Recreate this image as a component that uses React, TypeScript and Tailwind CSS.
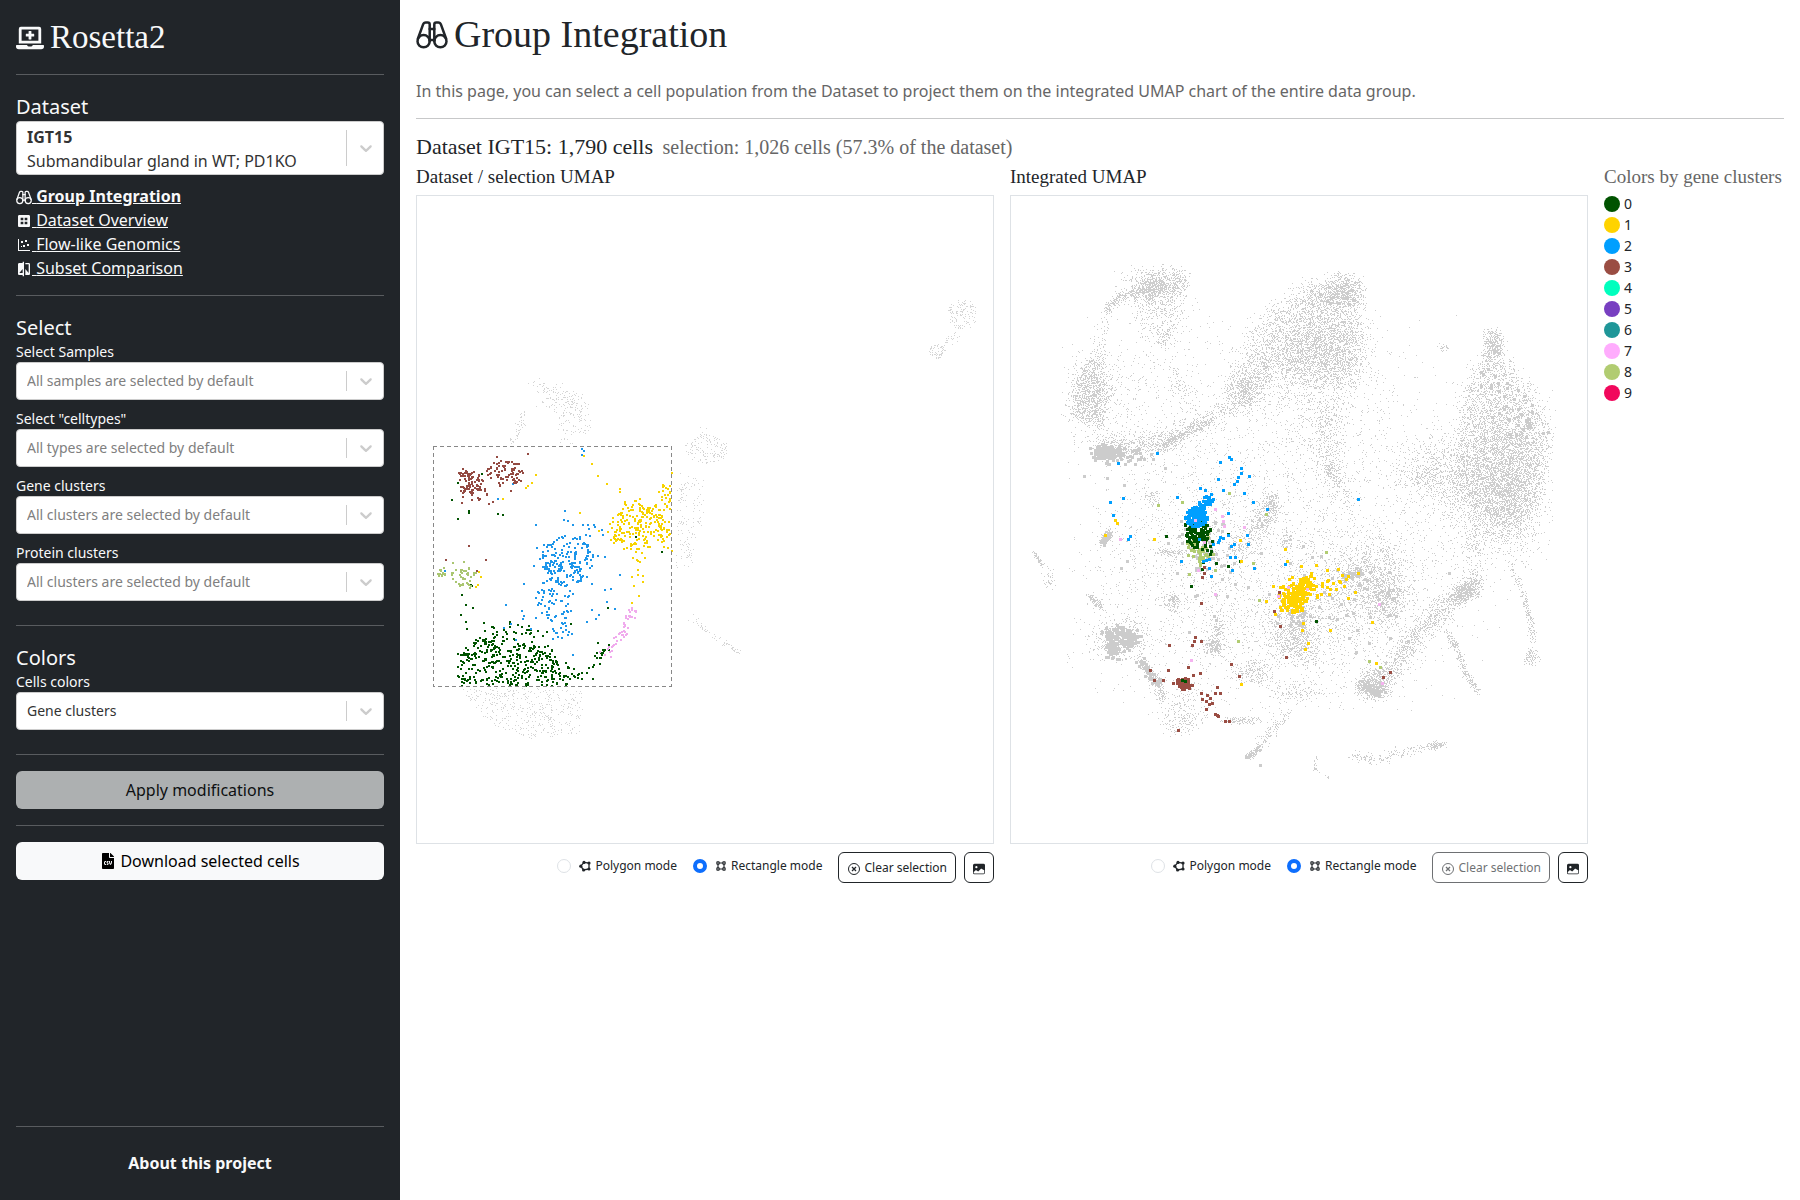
import React, { useId, useState } from 'react';
import type { ReactNode } from 'react';
import clsx from 'clsx';
import { BsImageFill } from 'react-icons/bs';
import { FaFileCsv, FaLaptopMedical } from 'react-icons/fa';
import { MdCompare, MdDataset } from 'react-icons/md';
import { PiBoundingBoxBold } from 'react-icons/pi';

type Icon = (props: { className?: string }) => ReactNode;

type Point = [number, number];

// cloud: gaussian around a centre, disc: even fill of an ellipse,
// area: even fill of a polygon, trail: jitter along a polyline
type Shape =
  | { kind: 'cloud' | 'disc'; at: Point; r: Point; n: number }
  | { kind: 'area' | 'trail'; pts: Point[]; w?: number; n: number }
  | { kind: 'exact'; pts: Point[] };

interface Layer {
  color: string;
  size: number;
  shapes: Shape[];
}

const cloud = (x: number, y: number, rx: number, ry: number, n: number): Shape => ({ kind: 'cloud', at: [x, y], r: [rx, ry], n });
const disc = (x: number, y: number, rx: number, ry: number, n: number): Shape => ({ kind: 'disc', at: [x, y], r: [rx, ry], n });
const area = (n: number, ...pts: Point[]): Shape => ({ kind: 'area', pts, n });
const trail = (n: number, w: number, ...pts: Point[]): Shape => ({ kind: 'trail', pts, w, n });
const exact = (...pts: Point[]): Shape => ({ kind: 'exact', pts });

const GENE_CLUSTERS = [
  { id: '0', color: '#005300' },
  { id: '1', color: '#ffd300' },
  { id: '2', color: '#009fff' },
  { id: '3', color: '#9a4d43' },
  { id: '4', color: '#00ffbe' },
  { id: '5', color: '#783fc1' },
  { id: '6', color: '#1f9698' },
  { id: '7', color: '#ffacfd' },
  { id: '8', color: '#b1cc71' },
  { id: '9', color: '#f1085c' },
];

function makeRandom(seed: number) {
  let s = seed;
  return () => {
    s = (s + 0x6d2b79f5) | 0;
    let t = Math.imul(s ^ (s >>> 15), 1 | s);
    t = (t + Math.imul(t ^ (t >>> 7), 61 | t)) ^ t;
    return ((t ^ (t >>> 14)) >>> 0) / 4294967296;
  };
}

function isInside([x, y]: Point, poly: Point[]) {
  let inside = false;
  for (let i = 0, j = poly.length - 1; i < poly.length; j = i++) {
    const [xi, yi] = poly[i];
    const [xj, yj] = poly[j];
    if (yi > y !== yj > y && x < ((xj - xi) * (y - yi)) / (yj - yi) + xi) inside = !inside;
  }
  return inside;
}

function sample(shape: Shape, rand: () => number): Point[] {
  // redraw anything past 2.2 sigma so no cluster leaves strays far away
  const gauss = (): number => {
    const g = Math.sqrt(-2 * Math.log(1 - rand())) * Math.cos(2 * Math.PI * rand());
    return Math.abs(g) > 2.2 ? gauss() : g;
  };
  const out: Point[] = [];

  if (shape.kind === 'exact') return shape.pts;

  if (shape.kind === 'cloud' || shape.kind === 'disc') {
    for (let i = 0; i < shape.n; i++) {
      if (shape.kind === 'cloud') {
        out.push([shape.at[0] + gauss() * shape.r[0], shape.at[1] + gauss() * shape.r[1]]);
      } else {
        const a = rand() * 2 * Math.PI;
        const d = Math.sqrt(rand());
        out.push([shape.at[0] + Math.cos(a) * d * shape.r[0], shape.at[1] + Math.sin(a) * d * shape.r[1]]);
      }
    }
    return out;
  }

  if (shape.kind === 'area') {
    const xs = shape.pts.map(p => p[0]);
    const ys = shape.pts.map(p => p[1]);
    const x0 = Math.min(...xs);
    const y0 = Math.min(...ys);
    const w = Math.max(...xs) - x0;
    const h = Math.max(...ys) - y0;
    const soft = shape.w ?? 0;
    while (out.length < shape.n) {
      const p: Point = [x0 + rand() * w, y0 + rand() * h];
      if (isInside(p, shape.pts)) out.push(soft ? [p[0] + gauss() * soft, p[1] + gauss() * soft] : p);
    }
    return out;
  }

  const spread = shape.w ?? 3;
  for (let i = 0; i < shape.n; i++) {
    const t = rand() * (shape.pts.length - 1);
    const k = Math.floor(t);
    const [ax, ay] = shape.pts[k];
    const [bx, by] = shape.pts[k + 1];
    out.push([ax + (bx - ax) * (t - k) + gauss() * spread, ay + (by - ay) * (t - k) + gauss() * spread]);
  }
  return out;
}

const softArea = (n: number, w: number, ...pts: Point[]): Shape => ({ kind: 'area', pts, w, n });

function toPath(layer: Layer, seed: number) {
  const rand = makeRandom(seed);
  const s = layer.size;
  return layer.shapes
    .flatMap(shape => sample(shape, rand))
    .map(([x, y]) => `M${Math.round(x)} ${Math.round(y)}h${s}v${s}h-${s}z`)
    .join('');
}

const DATASET_LAYERS: Layer[] = [
  {
    color: '#d6d6d6',
    size: 1,
    shapes: [
      trail(80, 7, [122, 192], [134, 202], [150, 212]),
      trail(110, 6, [150, 200], [160, 212], [170, 235]),
      trail(35, 4, [148, 220], [153, 248]),
      trail(20, 2, [109, 215], [105, 230]),
      trail(26, 3, [105, 230], [97, 248]),
      area(420, [44, 494], [167, 494], [168, 538], [120, 545], [86, 537], [63, 518]),
      disc(291, 255, 22, 14, 130),
      trail(14, 4, [290, 236], [288, 245]),
      trail(40, 5, [270, 285], [265, 310]),
      trail(30, 3, [283, 278], [282, 335]),
      trail(70, 5, [266, 325], [275, 350], [268, 367]),
      trail(60, 2, [275, 422], [291, 437], [325, 457]),
      disc(547, 120, 15, 15, 120),
      trail(20, 3, [542, 140], [526, 150]),
      disc(522, 157, 8, 7, 55),
    ],
  },
  {
    color: '#005300',
    size: 2,
    shapes: [
      area(350, [42, 456], [68, 440], [85, 452], [122, 448], [150, 462], [162, 478], [155, 491], [42, 491]),
      area(60, [58, 450], [72, 432], [100, 425], [130, 434], [140, 455]),
      trail(26, 4, [164, 485], [180, 465], [190, 452]),
      exact([36, 305], [42, 324], [53, 316], [53, 318], [82, 319], [87, 320], [42, 288], [66, 279], [220, 342], [246, 357], [56, 391], [46, 400], [50, 410], [57, 413], [45, 420], [50, 427], [68, 428], [51, 434], [192, 413], [155, 429], [55, 390]),
    ],
  },
  {
    color: '#1d96ea',
    size: 2,
    shapes: [
      disc(151, 366, 27, 26, 150),
      disc(136, 370, 8, 10, 20),
      disc(140, 405, 20, 22, 55),
      disc(147, 438, 14, 12, 16),
      disc(165, 338, 22, 14, 14),
      disc(150, 395, 60, 50, 34),
      exact([149, 316], [148, 325], [152, 326], [157, 330], [120, 330], [166, 254], [168, 256], [166, 260], [97, 289], [82, 304], [90, 410], [88, 433], [95, 429], [100, 445], [204, 380], [189, 395], [195, 394], [199, 414], [157, 460], [29, 376]),
    ],
  },
  {
    color: '#f7d300',
    size: 2,
    shapes: [
      disc(222, 335, 31, 22, 140),
      disc(224, 318, 22, 16, 55),
      area(24, [242, 290], [256, 288], [256, 315], [246, 312]),
      area(22, [238, 315], [256, 312], [256, 360], [244, 352]),
      disc(222, 370, 10, 18, 12),
      exact([168, 261], [176, 269], [182, 281], [191, 289], [204, 294], [204, 297], [256, 278], [120, 280], [112, 291], [116, 288], [110, 293], [87, 304], [164, 318], [63, 377], [65, 382], [62, 390], [60, 392], [183, 336], [227, 387], [218, 391], [223, 401], [216, 408]),
    ],
  },
  {
    color: '#944a42',
    size: 2,
    shapes: [
      disc(55, 288, 12, 13, 55),
      trail(18, 2, [45, 278], [56, 279]),
      disc(89, 276, 20, 10, 60),
      disc(58, 298, 14, 8, 26),
      disc(94, 287, 14, 5, 14),
      exact([112, 259], [81, 262], [95, 296], [77, 307], [73, 309], [53, 351], [30, 365], [70, 365], [61, 376], [46, 308]),
    ],
  },
  {
    color: '#aac671',
    size: 2,
    shapes: [disc(48, 383, 15, 11, 38), disc(25, 378, 5, 3, 14), exact([48, 367], [37, 368], [28, 373])],
  },
  {
    color: '#f0abed',
    size: 2,
    shapes: [trail(48, 3, [194, 457], [206, 438], [219, 412]), exact([184, 457], [195, 462])],
  },
];

const INTEGRATED_LAYERS: Layer[] = [
  {
    color: '#cecece',
    size: 1,
    shapes: [
      // upper left arc
      cloud(144, 93, 9, 8, 420),
      cloud(143, 94, 18, 11, 380),
      cloud(167, 88, 6, 8, 170),
      trail(230, 3, [95, 118], [112, 102], [135, 95]),
      cloud(153, 118, 14, 16, 260),
      cloud(156, 141, 5, 7, 80),
      trail(60, 5, [95, 120], [90, 150], [88, 170]),
      softArea(850, 3, [90, 157], [70, 180], [63, 198], [65, 222], [93, 234], [99, 202], [94, 180]),
      cloud(85, 200, 15, 26, 420),
      trail(70, 5, [160, 170], [168, 195], [182, 212]),
      cloud(145, 200, 40, 45, 420),
      // bridge towards the central lobe
      trail(700, 6, [90, 252], [125, 252], [160, 245], [207, 223]),
      trail(260, 3, [153, 252], [170, 241], [200, 227]),
      trail(300, 8, [207, 222], [235, 198], [262, 168]),
      cloud(236, 198, 9, 10, 320),
      // central lobe
      softArea(2300, 6, [250, 120], [290, 100], [340, 84], [350, 95], [348, 160], [340, 195], [300, 185], [262, 175], [236, 200], [222, 192], [232, 160]),
      cloud(311, 152, 26, 20, 1400),
      cloud(334, 96, 10, 9, 450),
      cloud(308, 102, 14, 10, 280),
      cloud(300, 195, 40, 30, 800),
      trail(420, 9, [318, 215], [318, 245], [320, 272], [332, 300]),
      cloud(321, 275, 3, 4, 70),
      cloud(434, 153, 3, 2, 25),
      // right lobe
      softArea(3500, 5, [485, 138], [497, 165], [518, 192], [540, 228], [536, 265], [526, 298], [512, 325], [490, 335], [466, 315], [440, 285], [448, 250], [453, 205], [468, 172]),
      softArea(650, 12, [405, 280], [440, 240], [470, 300], [445, 330]),
      cloud(484, 150, 5, 8, 300),
      cloud(495, 268, 22, 35, 1700),
      cloud(498, 310, 20, 30, 900),
      cloud(485, 325, 25, 25, 350),
      cloud(412, 278, 16, 14, 240),
      // thin background
      cloud(290, 280, 95, 75, 1100),
      cloud(390, 350, 60, 55, 600),
      cloud(200, 380, 65, 65, 1700),
      cloud(320, 420, 60, 45, 1400),
      // lower right branches
      trail(130, 6, [463, 340], [463, 365], [468, 388]),
      trail(420, 5, [466, 388], [457, 398], [440, 408]),
      cloud(455, 398, 7, 4, 220),
      trail(800, 7, [440, 408], [423, 425], [400, 448], [385, 470], [367, 490]),
      cloud(366, 490, 9, 8, 400),
      cloud(367, 498, 4, 4, 120),
      trail(130, 4, [349, 490], [360, 494]),
      trail(190, 2, [500, 368], [515, 402], [522, 428], [523, 460]),
      cloud(522, 463, 4, 4, 80),
      trail(230, 2, [437, 438], [448, 455], [456, 480], [470, 498]),
      cloud(363, 372, 20, 14, 420),
      cloud(377, 402, 9, 13, 420),
      cloud(350, 400, 26, 18, 560),
      cloud(287, 444, 14, 14, 620),
      // bottom
      trail(170, 3, [340, 560], [367, 566], [390, 558], [427, 552]),
      cloud(427, 551, 5, 2, 90),
      trail(160, 2, [238, 563], [250, 553]),
      trail(110, 4, [250, 553], [263, 535], [277, 518]),
      trail(30, 1, [306, 560], [305, 574], [320, 584]),
      cloud(287, 498, 14, 6, 130),
      cloud(234, 526, 11, 2, 110),
      cloud(243, 478, 10, 6, 190),
      cloud(205, 452, 5, 5, 190),
      trail(70, 3, [205, 440], [212, 428]),
      cloud(163, 407, 4, 5, 120),
      cloud(160, 358, 7, 2, 80),
      trail(160, 2, [92, 349], [101, 337]),
      trail(70, 1, [24, 358], [34, 372]),
      cloud(40, 384, 4, 6, 35),
      trail(110, 2, [79, 401], [92, 413]),
      cloud(110, 444, 16, 11, 420),
      trail(200, 3, [130, 460], [140, 478], [150, 490], [152, 505]),
      cloud(172, 525, 12, 8, 160),
      cloud(180, 505, 12, 10, 90),
      cloud(143, 303, 4, 4, 60),
      trail(420, 7, [263, 308], [253, 328], [227, 358]),
      cloud(263, 308, 4, 5, 110),
      cloud(278, 345, 3, 5, 50),
    ],
  },
  {
    color: '#cccccc',
    size: 3,
    shapes: [
      cloud(94, 257, 8, 4, 85),
      cloud(108, 260, 16, 5, 65),
      softArea(40, 2, [484, 150], [500, 180], [540, 230], [520, 260], [470, 210], [462, 190]),
      disc(330, 100, 20, 12, 14),
      cloud(102, 452, 4, 7, 80),
      trail(60, 3, [95, 440], [110, 436], [127, 440]),
      cloud(118, 448, 5, 4, 35),
      trail(40, 2, [130, 464], [140, 480], [150, 488]),
      cloud(367, 497, 4, 3, 22),
      cloud(356, 490, 4, 3, 8),
      cloud(343, 379, 8, 5, 24),
      cloud(330, 405, 35, 28, 40),
      cloud(377, 400, 5, 6, 10),
      cloud(195, 352, 12, 12, 60),
      cloud(200, 390, 30, 25, 18),
      cloud(284, 422, 9, 6, 22),
      trail(14, 1, [92, 348], [98, 342]),
      exact([74, 281], [97, 283], [114, 290], [155, 273], [236, 562], [240, 560], [246, 555], [250, 570], [439, 378], [117, 366], [111, 373], [200, 449], [206, 452], [202, 447], [238, 392]),
    ],
  },
  {
    color: '#b1cc71',
    size: 3,
    shapes: [cloud(190, 355, 7, 8, 46), exact([148, 310], [172, 307], [219, 298], [256, 319], [243, 368], [228, 446], [249, 405], [316, 357], [359, 466], [370, 472], [179, 379], [205, 375])],
  },
  {
    color: '#005300',
    size: 3,
    shapes: [disc(188, 339, 13, 14, 75), cloud(188, 335, 8, 5, 20), cloud(196, 354, 8, 8, 8), exact([156, 341], [181, 391], [218, 339], [218, 371], [206, 368], [306, 426], [230, 366], [192, 374])],
  },
  {
    color: '#009fff',
    size: 3,
    shapes: [
      disc(186, 322, 11, 10, 120),
      trail(60, 3, [186, 318], [194, 312], [198, 303]),
      cloud(208, 350, 14, 12, 16),
      exact([210, 267], [219, 262], [221, 264], [231, 273], [228, 282], [227, 286], [231, 278], [239, 281], [208, 284], [224, 289], [190, 293], [195, 295], [213, 295], [234, 298], [243, 307], [167, 302], [113, 303], [100, 307], [103, 320], [147, 258], [108, 268], [348, 304], [118, 344], [120, 341], [171, 366], [237, 340], [257, 314], [244, 373], [201, 381], [275, 369], [222, 375], [218, 318]),
    ],
  },
  {
    color: '#ffd300',
    size: 3,
    shapes: [
      cloud(283, 404, 7, 6, 150),
      trail(60, 4, [284, 398], [291, 390], [300, 384]),
      cloud(306, 390, 16, 8, 34),
      exact([105, 325], [107, 328], [95, 340], [144, 344], [230, 345], [231, 366], [277, 366], [275, 354], [291, 371], [306, 370], [263, 391], [256, 406], [265, 419], [362, 427], [320, 435], [293, 428], [292, 435], [298, 448], [295, 454], [231, 489], [366, 468], [328, 374], [345, 397], [348, 378], [332, 380], [338, 381], [330, 387]),
    ],
  },
  {
    color: '#9a4d43',
    size: 3,
    shapes: [
      cloud(174, 489, 4, 3, 65),
      exact([191, 498], [192, 504], [197, 500], [196, 506], [200, 503], [202, 508], [199, 509], [205, 519], [207, 520], [208, 521], [196, 514]),
      exact([215, 526], [219, 526], [168, 535], [158, 475], [159, 450], [184, 446], [185, 442], [182, 450], [191, 446], [178, 472], [190, 478], [183, 480], [205, 498], [207, 492], [210, 498], [221, 469], [229, 481], [276, 462], [269, 397], [264, 416], [270, 431], [140, 475], [144, 485], [153, 485], [163, 488], [194, 372], [192, 382], [191, 408], [373, 482], [380, 477], [194, 378]),
    ],
  },
  {
    color: '#f5b3f0',
    size: 3,
    shapes: [exact([213, 326], [212, 321], [214, 331], [194, 347], [205, 314], [185, 325], [205, 399], [181, 465], [278, 392], [268, 401], [297, 394], [369, 409], [372, 488], [110, 344], [188, 375], [234, 332])],
  },
  {
    color: '#005300',
    size: 3,
    shapes: [exact([172, 485], [175, 486])],
  },
];

/* ---------------- Icons ---------------- */

const BinocularsIcon: Icon = ({ className }) => (
  <svg viewBox="0 0 32 32" fill="none" stroke="currentColor" strokeWidth="2.5" strokeLinejoin="round" strokeLinecap="round" className={className} aria-hidden="true">
    <circle cx="7.6" cy="23.2" r="6.1" />
    <circle cx="24.4" cy="23.2" r="6.1" />
    <path d="M1.8 21L7 6.6C7.5 5.2 8.4 4.5 9.8 4.5h2c1.2 0 1.9 .8 1.9 2v16.7M30.200 21L25 6.600C24.500 5.200 23.600 4.500 22.200 4.500h-2c-1.200 0-1.900 .8-1.900 2v16.700" />
    <path d="M13.700 11h4.600M13.700 22h4.600" />
  </svg>
);

const ScatterIcon: Icon = ({ className }) => (
  <svg viewBox="0 0 16 16" fill="currentColor" className={className} aria-hidden="true">
    <path d="M2 2h1v11h11v1H2zM5 4h2v2H5zM9 3h2v2H9zM7 8h2v2H7zM11 7h2v2h-2zM5 9h1v1H5z" />
  </svg>
);

const PolygonIcon: Icon = ({ className }) => (
  <svg viewBox="0 0 12 12" fill="currentColor" className={className} aria-hidden="true">
    <path d="M1.800 6.200L5 2.400L10 3L10 9L4.600 10z" fill="none" stroke="currentColor" strokeWidth="1.300" />
    <circle cx="1.800" cy="6.200" r="1.600" />
    <circle cx="5" cy="2.400" r="1.600" />
    <circle cx="10" cy="3" r="1.600" />
    <circle cx="10" cy="9" r="1.600" />
    <circle cx="4.600" cy="10" r="1.600" />
  </svg>
);

const ClearIcon: Icon = ({ className }) => (
  <svg viewBox="0 0 14 14" fill="none" stroke="currentColor" className={className} aria-hidden="true">
    <circle cx="7" cy="7" r="5.500" />
    <path d="M5 5l4 4M9 5l-4 4" strokeWidth="1.300" />
  </svg>
);

/* ---------------- Charts ---------------- */

function Umap({ layers, seed, children, label }: { layers: Layer[]; seed: number; children?: ReactNode; label: string }) {
  return (
    <svg
      viewBox="1 1 578 649"
      role="img"
      aria-label={label}
      shapeRendering="crispEdges"
      className="block aspect-[578/649] w-full outline-1 -outline-offset-1 outline-[#dee2e6]"
    >
      {layers.map((layer, i) => (
        <path key={i} d={toPath(layer, seed + i)} fill={layer.color} />
      ))}
      {children}
    </svg>
  );
}

const MODES: { id: string; text: string; Icon: Icon }[] = [
  { id: 'polygon', text: 'Polygon mode', Icon: PolygonIcon },
  { id: 'rectangle', text: 'Rectangle mode', Icon: PiBoundingBoxBold as Icon },
];

function ChartPanel({ title, canClear, children }: { title: string; canClear: boolean; children: ReactNode }) {
  const name = useId();
  const [mode, setMode] = useState('rectangle');

  return (
    <section className="min-w-0 flex-1">
      <h3 className="mb-2 font-['Liberation_Serif',serif] text-[19px] leading-5">{title}</h3>
      {children}
      <div className="mt-2 flex items-center justify-end gap-4 text-xs leading-5">
        {MODES.map(({ id, text, Icon }) => (
          <label key={id} className="flex items-center gap-2 pb-1">
            <input
              type="radio"
              name={name}
              checked={mode === id}
              onChange={() => setMode(id)}
              className="h-[14px] w-[14px] shrink-0 appearance-none rounded-full border border-[#dee2e6] bg-white checked:border-4 checked:border-[#0d6efd]"
            />
            <span className="flex items-center gap-1">
              <Icon className="h-3 w-3" />
              {text}
            </span>
          </label>
        ))}
        <div className="flex gap-2">
          <button
            type="button"
            disabled={!canClear}
            className="flex h-[31px] items-center gap-[3px] rounded-md border border-[#212529] px-2 disabled:opacity-65"
          >
            <ClearIcon className="mt-[3px] h-[14px] w-[14px]" />
            Clear selection
          </button>
          <button
            type="button"
            aria-label="Save image"
            className="flex h-[31px] w-[30px] items-center justify-center rounded-md border border-[#212529]"
          >
            <BsImageFill className="mt-[3px] h-3 w-3" aria-hidden="true" />
          </button>
        </div>
      </div>
    </section>
  );
}

/* ---------------- Sidebar ---------------- */

function Chevron() {
  return (
    <span className="pointer-events-none absolute inset-y-0 right-0 flex items-stretch">
      <span className="my-[9px] w-px bg-[#cccccc]" />
      <span className="flex w-[37px] items-center justify-center text-[#cccccc]">
        <svg viewBox="0 0 20 20" className="h-5 w-5" fill="currentColor" aria-hidden="true">
          <path d="M4.516 7.548c0.436-0.446 1.043-0.481 1.576 0l3.908 3.747 3.908-3.747c0.533-0.481 1.141-0.446 1.574 0 0.436 0.445 0.408 1.197 0 1.615-0.406 0.418-4.695 4.502-4.695 4.502-0.217 0.223-0.502 0.335-0.787 0.335s-0.57-0.112-0.789-0.335c0 0-4.287-4.084-4.695-4.502s-0.436-1.17 0-1.615z" />
        </svg>
      </span>
    </span>
  );
}

function SelectField({ label, value, filled = false }: { label: string; value: string; filled?: boolean }) {
  const id = useId();
  return (
    <div>
      <label htmlFor={id} className="block text-sm leading-[21px]">
        {label}
      </label>
      <div className="relative">
        <select
          id={id}
          className={clsx(
            'block h-[38px] w-full appearance-none rounded border border-[#cccccc] bg-white pr-10 pl-[10px] text-sm',
            filled ? 'text-[#333333]' : 'text-[#808080]'
          )}
        >
          <option>{value}</option>
        </select>
        <Chevron />
      </div>
    </div>
  );
}

const PAGES: { text: string; Icon: Icon }[] = [
  { text: 'Group Integration', Icon: BinocularsIcon },
  { text: 'Dataset Overview', Icon: MdDataset as Icon },
  { text: 'Flow-like Genomics', Icon: ScatterIcon },
  { text: 'Subset Comparison', Icon: MdCompare as Icon },
];

function Sidebar() {
  return (
    <aside className="flex min-h-screen w-[400px] shrink-0 flex-col bg-[#212529] px-4 text-[#f8f9fa]">
      <h1 className="flex h-[74px] items-center gap-1.5 pt-0.5 font-['Liberation_Serif',serif] text-[33px]">
        <FaLaptopMedical className="h-7 w-7" aria-hidden="true" />
        Rosetta2
      </h1>
      <hr className="border-[#595c5f]" />

      <h2 className="mt-5 text-xl leading-6" id="dataset-label">
        Dataset
      </h2>
      <div className="relative mt-0.5">
        <div className="h-[54px] rounded border border-[#cccccc] bg-white pt-[3px] pl-[10px] text-base leading-6 text-[#333333]">
          <div className="font-bold">IGT15</div>
          <div>Submandibular gland in WT; PD1KO</div>
        </div>
        <select aria-labelledby="dataset-label" className="absolute inset-0 h-full w-full opacity-0">
          <option>IGT15 - Submandibular gland in WT; PD1KO</option>
        </select>
        <Chevron />
      </div>

      <nav className="mt-[9px] mb-[15px]">
        {PAGES.map(({ text, Icon }, i) => (
          <div key={text} className="h-6 leading-6">
            <a href="#" className={clsx('underline', i === 0 && 'font-bold')}>
              <Icon className="inline h-4 w-4 align-[-3px]" /> {text}
            </a>
          </div>
        ))}
      </nav>
      <hr className="border-[#595c5f]" />

      <h2 className="mt-5 mb-px text-xl leading-6">Select</h2>
      <div className="mb-6 flex flex-col gap-2">
        <SelectField label="Select Samples" value="All samples are selected by default" />
        <SelectField label={'Select "celltypes"'} value="All types are selected by default" />
        <SelectField label="Gene clusters" value="All clusters are selected by default" />
        <SelectField label="Protein clusters" value="All clusters are selected by default" />
      </div>
      <hr className="border-[#595c5f]" />

      <h2 className="mt-5 mb-px text-xl leading-6">Colors</h2>
      <SelectField label="Cells colors" value="Gene clusters" filled />
      <hr className="mt-6 border-[#595c5f]" />

      <button type="button" disabled className="my-4 h-[38px] rounded-md bg-[#adb0b1] text-base text-[#0e1012]">
        Apply modifications
      </button>
      <hr className="border-[#595c5f]" />
      <button type="button" className="mt-4 flex h-[38px] items-center justify-center gap-1 rounded-md bg-[#f8f9fa] text-base text-black">
        <FaFileCsv className="h-4 w-4" aria-hidden="true" />
        Download selected cells
      </button>

      <footer className="mt-auto">
        <hr className="border-[#595c5f]" />
        <p className="py-6 text-center leading-[25px] font-bold">
          <a href="#">About this project</a>
        </p>
      </footer>
    </aside>
  );
}

export default function App() {
  return (
    <div className="flex min-h-screen bg-white font-['Noto_Sans',sans-serif] text-base text-[#212529]">
      <Sidebar />

      <main className="min-w-0 flex-1 px-4">
        <h1 className="flex h-[68px] items-center gap-1.5 font-['Liberation_Serif',serif] text-[38px]">
          <BinocularsIcon className="h-8 w-8" />
          Group Integration
        </h1>
        <p className="mt-[11px] mb-[15px] leading-6 text-[#666666]">
          In this page, you can select a cell population from the Dataset to project them on the integrated UMAP chart of the
          entire data group.
        </p>
        <hr className="border-[#c7c8c9]" />

        <h2 className="mt-4 mb-2 font-['Liberation_Serif',serif] text-[22px] leading-6">
          Dataset IGT15: 1,790 cells <small className="ml-1 text-xl leading-6 text-[#666666]">selection: 1,026 cells (57.3% of the dataset)</small>
        </h2>

        <div className="flex gap-4">
          <ChartPanel title="Dataset / selection UMAP" canClear>
            <Umap layers={DATASET_LAYERS} seed={11} label="Dataset and selection UMAP">
              <rect x="18" y="252" width="238" height="240" fill="none" stroke="#888888" strokeDasharray="4 3" />
            </Umap>
          </ChartPanel>

          <ChartPanel title="Integrated UMAP" canClear={false}>
            <Umap layers={INTEGRATED_LAYERS} seed={71} label="Integrated UMAP" />
          </ChartPanel>

          <section className="w-[180px] shrink-0">
            <h3 className="mb-1.5 font-['Liberation_Serif',serif] text-[19px] leading-5 whitespace-nowrap text-[#666666]">Colors by gene clusters</h3>
            <ul>
              {GENE_CLUSTERS.map(({ id, color }) => (
                <li key={id} className="flex items-center gap-1 text-sm leading-[21px]">
                  <span className="h-4 w-4 rounded-full" style={{ backgroundColor: color }} />
                  {id}
                </li>
              ))}
            </ul>
          </section>
        </div>
      </main>
    </div>
  );
}
